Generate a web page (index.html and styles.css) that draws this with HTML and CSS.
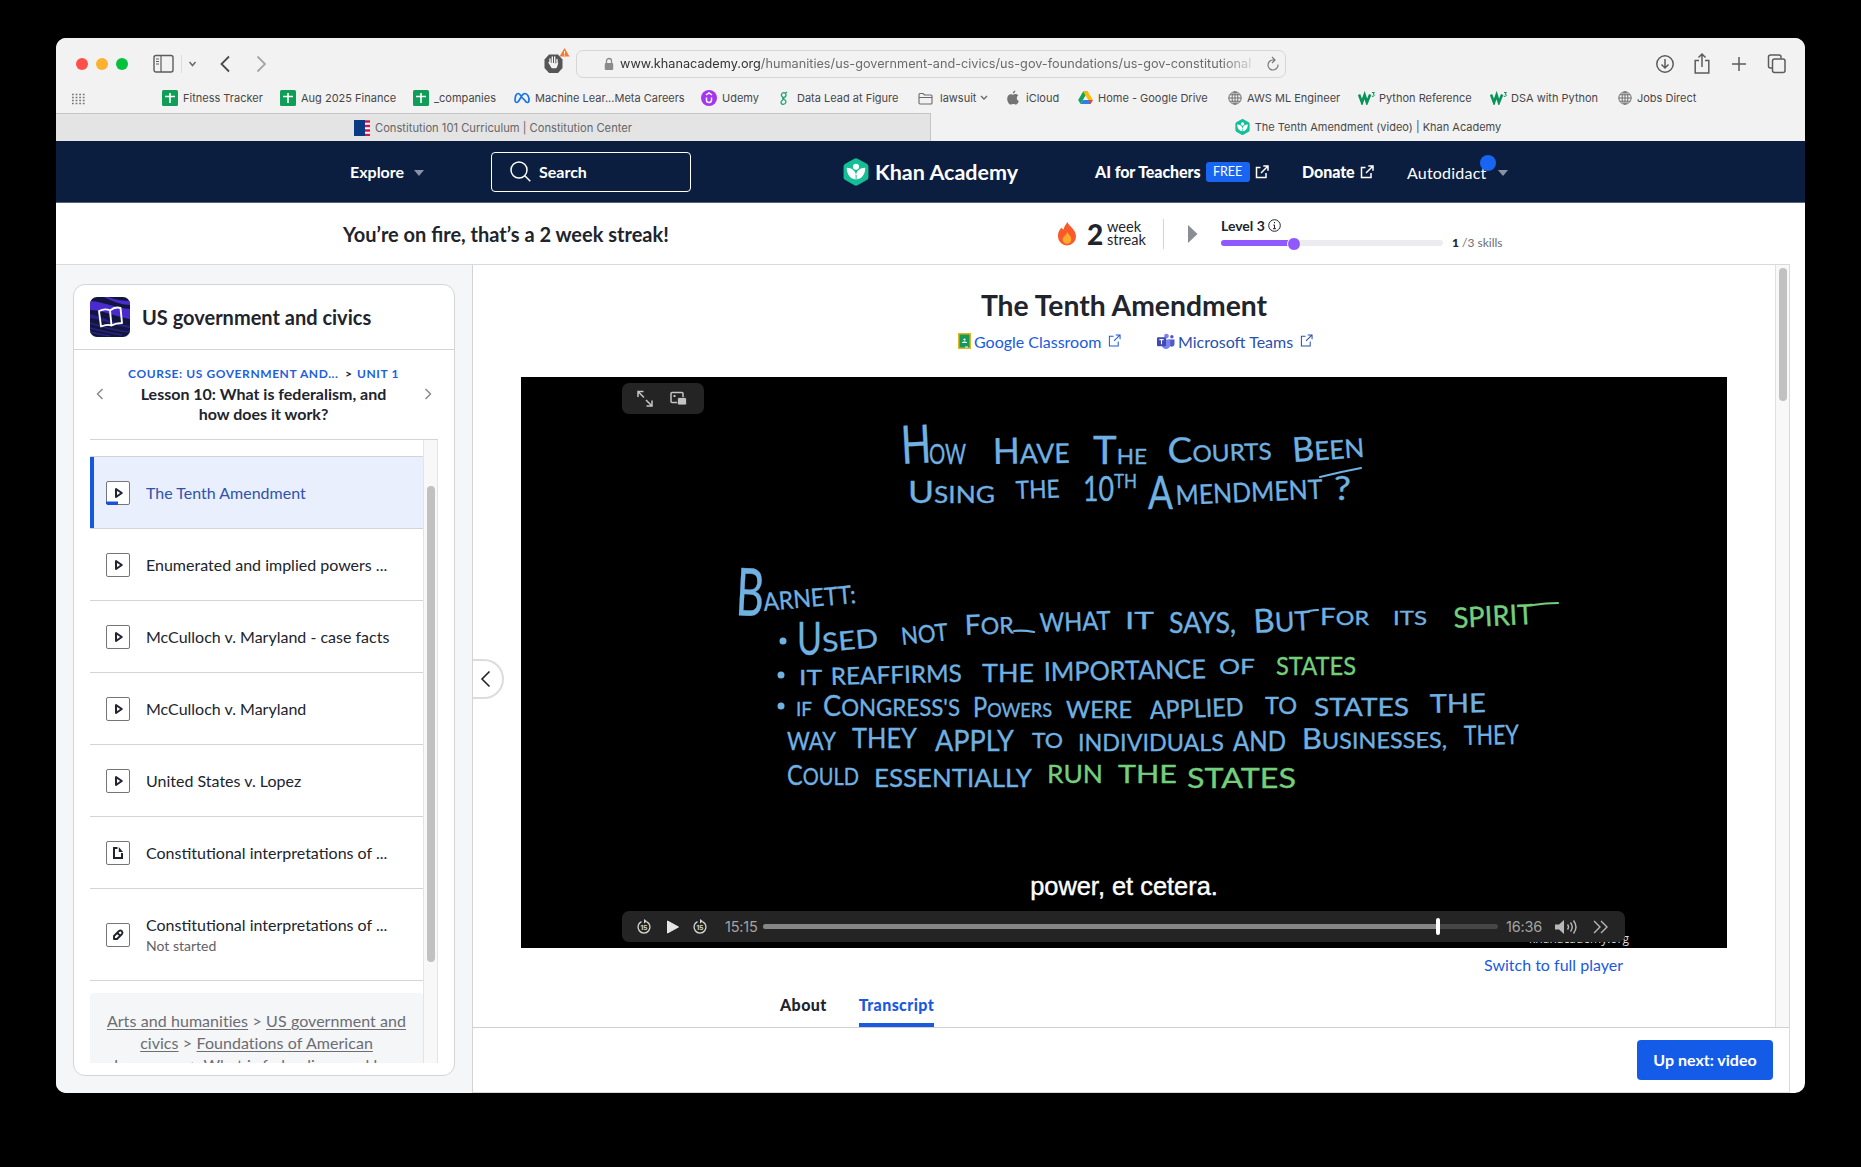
FILE: index.html
```html
<!DOCTYPE html>
<html lang="en">
<head>
<meta charset="utf-8">
<title>The Tenth Amendment (video) | Khan Academy</title>
<link rel="stylesheet" href="styles.css">
</head>
<body>
<svg class="defs" width="0" height="0" aria-hidden="true">
  <symbol id="sheet" viewBox="0 0 16 16"><rect width="16" height="16" rx="1.5" fill="#0f9d58"/><path d="M8 3v10M3 6.5h10" stroke="#fff" stroke-width="1.6"/></symbol>
  <symbol id="globe" viewBox="0 0 14 14"><g fill="none" stroke="#6e6e6e" stroke-width="1"><circle cx="7" cy="7" r="6.2"/><ellipse cx="7" cy="7" rx="2.9" ry="6.2"/><path d="M7 .8v12.4M.8 7h12.4M1.8 3.8h10.4M1.8 10.2h10.4"/></g></symbol>
  <symbol id="w3" viewBox="0 0 18 14"><path d="M1 3.5l3 8 2.600-7.500 2.300 7.500 3.300-8" fill="none" stroke="#07945b" stroke-width="2.600"/><path d="M14 1.500h2.400l-1.300 1.700c2 .1 1.700 2.600-1.200 2.100" fill="none" stroke="#07945b" stroke-width="1"/></symbol>
  <symbol id="ext" viewBox="0 0 14 14"><path d="M5.500 2.500H1.500v10h9.500V8M8.300 1h4.700v4.700M13 1L6 8" fill="none" stroke="currentColor" stroke-width="1.500"/></symbol>
  <symbol id="extthin" viewBox="0 0 14 14"><path d="M6 2.500H1.500v10.500h9.500V8M8.300 1h4.700v4.700M13 1L6.500 7.500" fill="none" stroke="currentColor" stroke-width="1.100"/></symbol>
  <symbol id="play" viewBox="0 0 24 24"><rect x=".5" y=".5" width="23" height="23" rx="1.500" fill="#fff" stroke="#74767b"/><path d="M10 8v8l5.800-4z" fill="none" stroke="#21242c" stroke-width="2" stroke-linejoin="round"/></symbol>
  <symbol id="leaf" viewBox="0 0 28 30"><path d="M12.300.6a3.600 3.600 0 0 1 3.400 0l9.900 5.600a3.600 3.600 0 0 1 1.800 3v11.500a3.600 3.600 0 0 1-1.800 3l-9.900 5.700a3.600 3.600 0 0 1-3.400 0l-9.900-5.700a3.600 3.600 0 0 1-1.800-3V9.200a3.600 3.600 0 0 1 1.800-3z" fill="#14bf96"/><circle cx="14" cy="9.300" r="3.300" fill="#fff"/><path d="M4 10.500c0 7 4 12.500 10 12.500s10-5.500 10-12.500c-5.500 0-9 3-10 7.500-1-4.500-4.500-7.500-10-7.500z" fill="#fff"/><path d="M14 18c.2 1.800.2 3.500 0 5" stroke="#14bf96" stroke-width="1"/></symbol>
  <symbol id="skip" viewBox="0 0 16 16"><path d="M10.500 2.600A6 6 0 1 1 5.500 2.600" fill="none" stroke="#d8d8d8" stroke-width="1.300"/><path d="M8 0l3 2.200L8 4.500z" fill="#d8d8d8"/><text x="8" y="11.200" text-anchor="middle" class="skip-num">15</text></symbol>
</svg>

<div class="window">
  <div class="toolbar">
    <div class="lights"><i class="red"></i><i class="amber"></i><i class="green"></i></div>
    <svg class="tb-left" width="124" height="24" viewBox="0 0 124 24" fill="none">
      <rect x="1" y="3.500" width="19" height="16.500" rx="2" stroke="#5c5c5c" stroke-width="1.400"/><path d="M8 3.500V20" stroke="#5c5c5c" stroke-width="1.200"/><path d="M3 7h3M3 9.500h3M3 12h3" stroke="#5c5c5c"/>
      <path d="M28.500 3v18" stroke="#dedede"/><path d="M36.500 10l3 3.500 3-3.500" stroke="#6a6a6a" stroke-width="1.500"/>
      <path d="M76 4.500L68.500 12l7.500 7.500" stroke="#4a4a4a" stroke-width="1.800"/><path d="M104.500 4.500l7.500 7.500-7.500 7.500" stroke="#a6a6a6" stroke-width="1.800"/>
    </svg>
    <svg class="tb-hand" width="30" height="30" viewBox="0 0 30 30">
      <path d="M7 7.500h9l4.500 5v8.500l-4.500 5H7l-4.500-5v-8.500z" fill="#555"/><path d="M8 17v-5M10.300 16v-6M12.700 16v-6M15 17v-4.500M7 15.500l3 5h4l1.500-4" stroke="#f2f2f2" stroke-width="1.400" stroke-linecap="round" stroke-linejoin="round" fill="#f2f2f2"/>
      <path d="M22.500 1l5 8.500h-10z" fill="#f47b30"/><path d="M22.500 4v3M22.500 7.700v1" stroke="#fff" stroke-width=".9"/>
    </svg>
    <div class="url">
      <svg width="10" height="14" viewBox="0 0 10 14"><rect x=".8" y="6" width="8.400" height="7" rx="1" fill="#8b8b8b"/><path d="M2.500 6V4a2.500 2.500 0 0 1 5 0v2" fill="none" stroke="#8b8b8b" stroke-width="1.300"/></svg>
      <span class="url-text"><b>www.khanacademy.org</b>/humanities/us-government-and-civics/us-gov-foundations/us-gov-constitutional</span>
      <svg width="14" height="16" viewBox="0 0 14 16" fill="none" stroke="#7b7b7b" stroke-width="1.200"><path d="M12 8.500A5 5 0 1 1 7 4h1.500M6 1l3 3-3 3"/></svg>
    </div>
    <svg class="tb-right" width="132" height="24" viewBox="0 0 132 24" fill="none" stroke="#5c5c5c" stroke-width="1.500">
      <circle cx="10" cy="12" r="8.200"/><path d="M10 7v9M6.500 12.500L10 16l3.500-3.500"/>
      <path d="M44 8.500h-3.800V21h13.600V8.500H50M47 15V2M43.500 5.500L47 2l3.500 3.500"/>
      <path d="M84 5v14M77 12h14"/>
      <rect x="117.500" y="7" width="12.500" height="13.500" rx="2"/><path d="M117 16h-1.500a2 2 0 0 1-2-2V5a2 2 0 0 1 2-2h8.500a2 2 0 0 1 2 2v1.500"/>
    </svg>
  </div>

  <div class="bookmarks">
    <svg class="dots" width="14" height="12" viewBox="0 0 14 12"><path d="M1 1.500h14M1 4.500h14M1 7.500h14M1 10.500h14" stroke="#777" stroke-width="1.600" stroke-dasharray="1.800 1.800"/></svg>
    <span><svg width="16" height="16"><use href="#sheet"/></svg>Fitness Tracker</span>
    <span><svg width="16" height="16"><use href="#sheet"/></svg>Aug 2025 Finance</span>
    <span><svg width="16" height="16"><use href="#sheet"/></svg>_companies</span>
    <span><svg width="16" height="16" viewBox="0 0 16 16"><path d="M8 7.500C6.500 5 5.500 3.500 4 3.500 2 3.500 1 7 1 10c0 3 2.300 3.500 4 .5L8 5.500c1-1.500 2-2 3-2 2.500 0 4 3.500 4 6.500s-2.500 3.500-4 .5z" fill="none" stroke="#1674e8" stroke-width="1.700"/></svg>Machine Lear...Meta Careers</span>
    <span><svg width="16" height="16" viewBox="0 0 16 16"><circle cx="8" cy="8" r="8" fill="#a435f0"/><path d="M5.500 7.500v2.700a2.500 2.300 0 0 0 5 0V7.500M5 5l3-2 3 2" fill="none" stroke="#fff" stroke-width="1.500"/></svg>Udemy</span>
    <span><svg width="8" height="16" viewBox="0 0 8 16"><g fill="none" stroke="#22a278" stroke-width="1.300"><circle cx="3.700" cy="5" r="2.300"/><path d="M5 3.500L7 2M3 7.500C1 9 6.500 9 6 12s-5 3-5 .5S4.500 10 4 7.500"/></g></svg>Data Lead at Figure</span>
    <span><svg width="15" height="13" viewBox="0 0 15 13" fill="none" stroke="#6a6a6a" stroke-width="1.100"><path d="M1 11V2.500A1 1 0 0 1 2 1.500h3l1.500 1.500H13a1 1 0 0 1 1 1V11a1 1 0 0 1-1 1H2a1 1 0 0 1-1-1zM1 5.500h13"/></svg><span class="folder">lawsuit</span><svg class="chev" width="8" height="6" viewBox="0 0 8 6"><path d="M1 1l3 3 3-3" fill="none" stroke="#666" stroke-width="1.300"/></svg></span>
    <span><svg width="12" height="16" viewBox="0 0 12 16"><path d="M8.300.5c.1 1.600-1 3-2.500 3.100C5.600 2.200 6.900.7 8.300.5zM6.100 4.800c.7 0 1.500-.7 2.700-.7 1 0 1.900.5 2.500 1.300-2.300 1.400-1.900 4.600.5 5.500-.5 1.600-1.700 3.700-3 3.700-.9 0-1.400-.6-2.500-.6s-1.600.6-2.500.6C1.900 14.600.2 11.500.2 8.800c0-2.800 1.700-4.600 3.600-4.600 1 0 1.700.6 2.300.6z" fill="#747474"/></svg><span class="cloud">iCloud</span></span>
    <span><svg width="15" height="14" viewBox="0 0 16 14"><path d="M5.500 0h5L5.300 9 2.700 13.500.2 9.200z" fill="#0fa457"/><path d="M5.500 0h5l5.300 9.200h-5z" fill="#fbbc04"/><path d="M5.300 9h10.500l-2.500 4.500H2.700z" fill="#2f7de9"/><path d="M10.800 9h5l-2.500 4.500z" fill="#ea4335"/><path d="M8 4.700L10.500 9h-5z" fill="#f2f2f2"/></svg>Home - Google Drive</span>
    <span><svg width="14" height="14"><use href="#globe"/></svg>AWS ML Engineer</span>
    <span class="w3"><svg width="18" height="14"><use href="#w3"/></svg>Python Reference</span>
    <span class="w3"><svg width="18" height="14"><use href="#w3"/></svg>DSA with Python</span>
    <span><svg width="14" height="14"><use href="#globe"/></svg>Jobs Direct</span>
  </div>

  <div class="tabs">
    <div class="tab inactive"><svg width="16" height="16" viewBox="0 0 16 16"><path d="M0 0h16v16H0z" fill="#fff"/><path d="M0 0h11v16H0z" fill="#0b3a82"/><path d="M11 1.500h5M11 6h5M11 10.500h5M11 15h5" stroke="#d4144b" stroke-width="2.400"/></svg>Constitution 101 Curriculum | Constitution Center</div>
    <div class="tab"><svg width="15" height="16"><use href="#leaf"/></svg>The Tenth Amendment (video) | Khan Academy</div>
  </div>

  <header class="nav">
    <div class="explore">Explore <i class="caret"></i></div>
    <div class="search"><svg width="21" height="21" viewBox="0 0 21 21" fill="none" stroke="#fff" stroke-width="1.500"><circle cx="9" cy="9" r="8"/><path d="M14.800 14.800l5.500 5.500"/></svg>Search</div>
    <div class="logo"><svg width="26" height="28"><use href="#leaf"/></svg><span>Khan Academy</span></div>
    <div class="teachers"><span>AI for Teachers</span><em>FREE</em><svg width="14" height="14"><use href="#ext"/></svg></div>
    <div class="donate"><span>Donate</span><svg width="14" height="14"><use href="#ext"/></svg></div>
    <div class="user">Autodidact<i class="badge"></i><i class="caret"></i></div>
  </header>

  <section class="streak">
    <h2>You’re on fire, that’s a 2 week streak!</h2>
    <svg class="flame" width="20" height="24" viewBox="0 0 20 24"><path d="M10.500 0c1 4 8.500 7 8.500 14.500a9 9 0 0 1-18 0C1 10 2.500 8 4.500 5.500c.5 1.200 1 1.800 2 2C7 5 8.500 2.500 10.500 0z" fill="#fa5a2a"/><path d="M10.300 10c1.500 3 4 4 4 7.500a4.300 4.300 0 0 1-8.600 0c0-3 3.600-4 4.600-7.500z" fill="#ffab2e"/></svg>
    <strong>2</strong>
    <div class="weeks">week<br>streak</div>
    <i class="rule"></i>
    <svg class="tri" width="10" height="18" viewBox="0 0 10 18"><path d="M0 0l9.500 9L0 18z" fill="#8b8d94"/></svg>
    <div class="level">
      <div class="level-name">Level 3 <svg width="13" height="13" viewBox="0 0 13 13" fill="none" stroke="#21242c"><circle cx="6.500" cy="6.500" r="5.800"/><path d="M6.500 6v3.700M5.300 6h1.200M5 9.700h3M6.500 3v1.300"/></svg></div>
      <div class="progress"><i style="width:74px"></i></div>
    </div>
    <div class="skills"><b>1</b> /3 skills</div>
  </section>

  <div class="body">
    <aside>
      <div class="card">
        <div class="course">
          <svg width="40" height="40" viewBox="0 0 40 40"><defs><clipPath id="tile"><rect width="40" height="40" rx="7"/></clipPath></defs><g clip-path="url(#tile)"><path d="M0 0h40v40H0z" fill="#11163f"/><path d="M0 4c14 1 26 7 40 8v10C27 20 12 13 0 13zM18 0c8 3 16 4 22 4v4C31 8 22 4 14 0z" fill="#4a2bd0"/><path d="M0 17c12 3 26 10 40 12v2C25 29 11 22 0 21z" fill="#27208a"/><path d="M0 26c12 4 25 8 40 9M0 31c10 3 20 5 32 7M0 35c8 2 14 3 20 4" stroke="#2a2080" stroke-width="1.500" fill="none"/></g><path d="M9 14c4-2 8-2 11-.5 3-2.500 7-3.500 10.500-2.500l1.500 15c-4 0-7 .5-10.500 2.500-3-1-7-.5-10.500 1zM20 13.500l1.500 15" fill="none" stroke="#fff" stroke-width="1.900" stroke-linejoin="round"/></svg>
          <h3>US government and civics</h3>
        </div>
        <div class="lesson">
          <svg width="8" height="12" viewBox="0 0 8 12"><path d="M6.500 1L1.500 6l5 5" fill="none" stroke="#85878d" stroke-width="1.400"/></svg>
          <div class="lesson-text">
            <p class="crumb">COURSE: US GOVERNMENT AND... <i>&gt;</i> UNIT 1</p>
            <h4>Lesson 10: What is federalism, and how does it work?</h4>
          </div>
          <svg width="8" height="12" viewBox="0 0 8 12"><path d="M1.500 1l5 5-5 5" fill="none" stroke="#85878d" stroke-width="1.400"/></svg>
        </div>
        <div class="scroller">
          <div class="list">
            <div class="item on"><svg width="24" height="24"><use href="#play"/><path d="M0 20.500h12V24H1.500L0 22.500z" fill="#1b50d8"/></svg><p>The Tenth Amendment</p></div>
            <div class="item"><svg width="24" height="24"><use href="#play"/></svg><p>Enumerated and implied powers ...</p></div>
            <div class="item"><svg width="24" height="24"><use href="#play"/></svg><p>McCulloch v. Maryland - case facts</p></div>
            <div class="item"><svg width="24" height="24"><use href="#play"/></svg><p>McCulloch v. Maryland</p></div>
            <div class="item"><svg width="24" height="24"><use href="#play"/></svg><p>United States v. Lopez</p></div>
            <div class="item"><svg width="24" height="24" viewBox="0 0 24 24"><rect x=".5" y=".5" width="23" height="23" rx="1.500" fill="#fff" stroke="#74767b"/><path d="M11.500 7H8v10h8v-5" fill="none" stroke="#21242c" stroke-width="2"/><path d="M12.800 6v5h4.200z" fill="#21242c"/></svg><p>Constitutional interpretations of ...</p></div>
            <div class="item tall"><svg width="24" height="24" viewBox="0 0 24 24"><rect x=".5" y=".5" width="23" height="23" rx="1.500" fill="#fff" stroke="#74767b"/><path d="M8 16v-3l5-5c2-1.500 4.500 1 3 3l-5 5zM11.500 10l2.800 2.800" fill="none" stroke="#21242c" stroke-width="1.900" stroke-linejoin="round"/></svg><p>Constitutional interpretations of ...<small>Not started</small></p></div>
            <div class="path"><u>Arts and humanities</u> &gt; <u>US government and civics</u> &gt; <u>Foundations of American democracy</u> &gt; <u>What is federalism, and how</u></div>
          </div>
          <div class="track"><i></i></div>
        </div>
      </div>
    </aside>

    <main>
      <div class="content">
        <div class="page">
          <h1>The Tenth Amendment</h1>
          <div class="share">
            <span class="gc"><svg width="13" height="16" viewBox="0 0 13 16"><path d="M0 0h13v16H0z" fill="#e5b520"/><path d="M1.500 1.500h10v13h-10z" fill="#119a5b"/><circle cx="6.500" cy="6.500" r="1.100" fill="#fff"/><path d="M3.800 10c0-2 5.400-2 5.400 0zM7 13.500h3v1H7z" fill="#fff"/></svg>Google Classroom<svg class="x" width="13" height="13"><use href="#extthin"/></svg></span>
            <span class="ms"><svg width="18" height="17" viewBox="0 0 19 17"><circle cx="10" cy="2.800" r="2.500" fill="#7b83eb"/><circle cx="15.700" cy="3.500" r="1.800" fill="#5059c9"/><path d="M12 6.500h6.500v4.500c0 3-3.500 4-5 2z" fill="#5059c9"/><path d="M5 6.500h9v5.500a4.500 4.500 0 0 1-9 0z" fill="#7b83eb"/><rect y="4" width="9.500" height="9.500" rx="1" fill="#4048b4"/><path d="M2.500 6.500h4.500M4.750 6.500v5" stroke="#fff" stroke-width="1.100"/></svg>Microsoft Teams<svg class="x" width="13" height="13"><use href="#extthin"/></svg></span>
          </div>
          <div class="video">
            <svg class="board" width="1206" height="571" viewBox="521 376 1206 571">
              <g class="ink">
                <text x="902" y="463" font-size="53" textLength="30" lengthAdjust="spacingAndGlyphs" transform="rotate(-3 902 463)">H</text>
                <text x="929" y="463" font-size="27" textLength="37" lengthAdjust="spacingAndGlyphs">OW</text>
                <text x="993" y="463" textLength="77" font-size="27" lengthAdjust="spacingAndGlyphs" transform="rotate(-1 993 463)"><tspan font-size="36">H</tspan>AVE</text>
                <text x="1093" y="463" textLength="54" font-size="22" lengthAdjust="spacingAndGlyphs"><tspan font-size="39">T</tspan>HE</text>
                <text x="1168" y="462" textLength="104" font-size="23" lengthAdjust="spacingAndGlyphs" transform="rotate(-2 1168 462)"><tspan font-size="35">C</tspan>OURTS</text>
                <text x="1293" y="461" textLength="72" font-size="26" lengthAdjust="spacingAndGlyphs" transform="rotate(-4 1293 461)"><tspan font-size="34">B</tspan>EEN</text>
                <text x="908" y="502" textLength="87" font-size="23" lengthAdjust="spacingAndGlyphs"><tspan font-size="31">U</tspan>SING</text>
                <text x="1016" y="498" textLength="44" font-size="25" lengthAdjust="spacingAndGlyphs" transform="rotate(-2 1016 498)">THE</text>
                <text x="1083" y="500" textLength="31" font-size="34" lengthAdjust="spacingAndGlyphs">10</text>
                <text x="1114" y="487" textLength="23" font-size="20" lengthAdjust="spacingAndGlyphs">TH</text>
                <text x="1148" y="508" textLength="25" font-size="46" lengthAdjust="spacingAndGlyphs">A</text>
                <text x="1176" y="504" textLength="147" font-size="27" lengthAdjust="spacingAndGlyphs" transform="rotate(-2.500 1176 504)">MENDMENT</text>
                <path d="M1320 476q20-5 41-9"/>
                <text x="1334" y="499" textLength="17" font-size="32" lengthAdjust="spacingAndGlyphs">?</text>
                <text x="735" y="614" textLength="28" font-size="66" lengthAdjust="spacingAndGlyphs" transform="rotate(3 735 614)">B</text>
                <text x="764" y="610" textLength="93" font-size="25" lengthAdjust="spacingAndGlyphs" transform="rotate(-5 764 610)">ARNETT:</text>
                <circle cx="783" cy="640" r="3.500"/>
                <text x="797" y="654" textLength="25" font-size="47" lengthAdjust="spacingAndGlyphs">U</text>
                <text x="823" y="651" textLength="56" font-size="26" lengthAdjust="spacingAndGlyphs" transform="rotate(-5 823 651)">SED</text>
                <text x="902" y="644" textLength="47" font-size="24" lengthAdjust="spacingAndGlyphs" transform="rotate(-6 902 644)">NOT</text>
                <text x="965" y="634" textLength="49" font-size="23" lengthAdjust="spacingAndGlyphs" transform="rotate(-2 965 634)"><tspan font-size="28">F</tspan>OR</text>
                <path d="M1014 630q9-1 20 1"/>
                <text x="1040" y="631" textLength="71" font-size="26" lengthAdjust="spacingAndGlyphs" transform="rotate(-2 1040 631)">WHAT</text>
                <text x="1125" y="628" textLength="29" font-size="24" lengthAdjust="spacingAndGlyphs">IT</text>
                <text x="1169" y="632" textLength="67" font-size="28" lengthAdjust="spacingAndGlyphs">SAYS,</text>
                <text x="1254" y="632" textLength="57" font-size="27" lengthAdjust="spacingAndGlyphs" transform="rotate(-3 1254 632)"><tspan font-size="33">B</tspan>UT</text>
                <path d="M1309 610q5-1 9-1"/>
                <text x="1320" y="624" textLength="49" font-size="20" lengthAdjust="spacingAndGlyphs"><tspan font-size="24">F</tspan>OR</text>
                <text x="1393" y="624" textLength="34" font-size="20" lengthAdjust="spacingAndGlyphs">ITS</text>
                <circle cx="781" cy="674" r="3.500"/>
                <text x="799" y="684" textLength="23" font-size="22" lengthAdjust="spacingAndGlyphs">IT</text>
                <text x="831" y="684" textLength="131" font-size="24" lengthAdjust="spacingAndGlyphs" transform="rotate(-1.500 831 684)">REAFFIRMS</text>
                <text x="982" y="681" textLength="52" font-size="25" lengthAdjust="spacingAndGlyphs">THE</text>
                <text x="1044" y="680" textLength="162" font-size="26" lengthAdjust="spacingAndGlyphs" transform="rotate(-1 1044 680)">IMPORTANCE</text>
                <text x="1219" y="673" textLength="36" font-size="22" lengthAdjust="spacingAndGlyphs">OF</text>
                <circle cx="781" cy="705" r="3.500"/>
                <text x="796" y="715" textLength="16" font-size="19" lengthAdjust="spacingAndGlyphs">IF</text>
                <text x="823" y="715" textLength="137" font-size="23" lengthAdjust="spacingAndGlyphs"><tspan font-size="28">C</tspan>ONGRESS'S</text>
                <text x="973" y="716" textLength="79" font-size="20" lengthAdjust="spacingAndGlyphs"><tspan font-size="26">P</tspan>OWERS</text>
                <text x="1066" y="717" textLength="66" font-size="23" lengthAdjust="spacingAndGlyphs">WERE</text>
                <text x="1150" y="718" textLength="94" font-size="25" lengthAdjust="spacingAndGlyphs" transform="rotate(-2 1150 718)">APPLIED</text>
                <text x="1265" y="713" textLength="32" font-size="23" lengthAdjust="spacingAndGlyphs">TO</text>
                <text x="1314" y="715" textLength="95" font-size="25" lengthAdjust="spacingAndGlyphs">STATES</text>
                <text x="1430" y="712" textLength="56" font-size="26" lengthAdjust="spacingAndGlyphs" transform="rotate(-1 1430 712)">THE</text>
                <text x="787" y="749" textLength="49" font-size="25" lengthAdjust="spacingAndGlyphs">WAY</text>
                <text x="852" y="747" textLength="65" font-size="26" lengthAdjust="spacingAndGlyphs">THEY</text>
                <text x="935" y="750" textLength="79" font-size="28" lengthAdjust="spacingAndGlyphs">APPLY</text>
                <text x="1032" y="747" textLength="31" font-size="21" lengthAdjust="spacingAndGlyphs">TO</text>
                <text x="1078" y="750" textLength="146" font-size="24" lengthAdjust="spacingAndGlyphs">INDIVIDUALS</text>
                <text x="1233" y="750" textLength="53" font-size="27" lengthAdjust="spacingAndGlyphs">AND</text>
                <text x="1302" y="748" textLength="145" font-size="22" lengthAdjust="spacingAndGlyphs" transform="rotate(-.5 1302 748)"><tspan font-size="29">B</tspan>USINESSES,</text>
                <text x="1464" y="744" textLength="55" font-size="27" lengthAdjust="spacingAndGlyphs" transform="rotate(-1 1464 744)">THEY</text>
                <text x="787" y="784" textLength="72" font-size="23" lengthAdjust="spacingAndGlyphs"><tspan font-size="27">C</tspan>OULD</text>
                <text x="874" y="786" textLength="158" font-size="25" lengthAdjust="spacingAndGlyphs">ESSENTIALLY</text>
              </g>
              <g class="ink lime">
                <text x="1454" y="627" textLength="80" font-size="28" lengthAdjust="spacingAndGlyphs" transform="rotate(-3 1454 627)">SPIRIT</text>
                <path d="M1533 604q13-2 25-2"/>
                <text x="1276" y="674" textLength="80" font-size="25" lengthAdjust="spacingAndGlyphs">STATES</text>
                <text x="1047" y="782" textLength="56" font-size="25" lengthAdjust="spacingAndGlyphs">RUN</text>
                <text x="1118" y="782" textLength="59" font-size="25" lengthAdjust="spacingAndGlyphs">THE</text>
                <text x="1187" y="787" textLength="109" font-size="26" lengthAdjust="spacingAndGlyphs">STATES</text>
              </g>
              <text class="mark" x="1529" y="942" textLength="100" lengthAdjust="spacingAndGlyphs">khanacademy.org</text>
            </svg>
            <div class="pip"><svg width="82" height="31" viewBox="0 0 82 31" fill="none" stroke="#c4c4c4" stroke-width="1.500"><path d="M16 14V8.500h5.500M16 8.500l6 6M30 17.500V23h-5.500M30 23l-6-6"/><rect x="49" y="9.500" width="12" height="10" rx="1"/><path d="M51.500 12h2v2h-2z" fill="#c4c4c4" stroke="none"/><rect x="55.500" y="14.500" width="9" height="7.500" rx="1.500" fill="#c4c4c4" stroke="#242424" stroke-width=".8"/></svg></div>
            <div class="caption">power, et cetera.</div>
            <div class="controls">
              <svg width="16" height="16"><use href="#skip"/></svg>
              <svg width="12" height="14" viewBox="0 0 12 14"><path d="M.5 1v12L11.500 7z" fill="#e6e6e6" stroke="#e6e6e6" stroke-linejoin="round"/></svg>
              <svg width="16" height="16"><use href="#skip"/></svg>
              <span class="t1">15:15</span>
              <div class="bar"><i style="width:674px"></i></div>
              <span class="t2">16:36</span>
              <svg width="23" height="16" viewBox="0 0 23 16" fill="none" stroke="#b8b8b8" stroke-width="1.400"><path d="M0 5.500h4L9 1v14l-5-4.500H0z" fill="#b8b8b8" stroke="none"/><path d="M12.500 5.500q2 2.500 0 5M15.500 3.500q3.500 4.500 0 9M18.500 1.500q5 6.500 0 13"/></svg>
              <svg width="16" height="14" viewBox="0 0 16 14" fill="none" stroke="#b8b8b8" stroke-width="1.400"><path d="M1 1l6 6-6 6M8 1l6 6-6 6"/></svg>
            </div>
          </div>
          <a class="switch">Switch to full player</a>
          <div class="subtabs"><b>About</b><b class="cur">Transcript</b></div>
        </div>
        <div class="pagetrack"><i></i></div>
      </div>
      <footer><span class="next">Up next: video</span></footer>
      <div class="collapse"><svg width="11" height="18" viewBox="0 0 11 18"><path d="M9.500 1.500L2 9l7.500 7.500" fill="none" stroke="#21242c" stroke-width="1.600"/></svg></div>
    </main>
  </div>
</div>
</body>
</html>
```
FILE: styles.css
```css
* { box-sizing: border-box; margin: 0; padding: 0; }
body { background: #000; font-family: Lato, sans-serif; color: #21242c; width: 1861px; height: 1167px; overflow: hidden; padding: 38px 56px; }
svg { display: block; flex: none; }
i, em { font-style: normal; }
.defs { position: absolute; }
.window { width: 1749px; height: 1055px; background: #fff; border-radius: 10px; overflow: hidden; display: flex; flex-direction: column; }

.toolbar { height: 52px; flex: none; background: #f3f2f3; display: flex; align-items: center; font-family: Inter, sans-serif; }
.lights { display: flex; gap: 8px; margin-left: 20px; width: 77px; }
.lights i { width: 12px; height: 12px; border-radius: 50%; }
.red { background: #ff4f4d; }
.amber { background: #ffb02e; }
.green { background: #05c13c; }
.tb-hand { margin-left: 265px; margin-top: -5px; }
.url { margin-left: 4px; width: 710px; height: 28px; border: 1px solid #d5d5d5; border-radius: 7px; display: flex; align-items: center; padding: 0 5px 0 27px; }
.url-text { margin-left: 6px; width: 633px; margin-right: 13px; font-size: 12.700px; line-height: 20px; color: #6b6b6b; white-space: nowrap; overflow: hidden; mask-image: linear-gradient(90deg, #000 95%, transparent 101%); }
.url-text b { font-weight: 400; color: #333; }
.tb-right { margin-left: 369px; }

.bookmarks { height: 23px; flex: none; background: #f3f2f3; padding-bottom: 8px; display: grid; align-items: center; font-family: Inter, sans-serif; font-size: 11px; color: #474747; white-space: nowrap;
  grid-template-columns: 90px 118px 133px 101px 187px 80px 137px 89px 71px 150px 130px 132px 128px 100px; padding-left: 15px; overflow: visible; }
.bookmarks > span { display: flex; align-items: center; gap: 5px; margin-left: 1px; }
.bookmarks > span:nth-of-type(6) { margin-left: 0; gap: 9px; }
.bookmarks > .w3 { gap: 3px; }
.bookmarks .folder, .bookmarks .cloud { margin-left: 2px; }
.dots { margin-top: 2px; }
.bookmarks .chev { margin-left: -1px; }

.tabs { height: 28px; flex: none; display: flex; background: #f3f2f3; font-family: Inter, sans-serif; font-size: 11px; color: #484848; }
.tab { flex: 1; display: flex; align-items: center; justify-content: center; gap: 5px; }
.tab.inactive { background: #e4e4e4; color: #666; border-top: 1px solid #c5c5c5; border-right: 1px solid #c5c5c5; font-size: 11.200px; }

.nav { height: 62px; flex: none; background: #0c1e40; border-bottom: 1px solid #556179; color: #fff; display: grid; align-items: center; font-size: 16px; font-weight: 700; padding-left: 294px;
  grid-template-columns: 141px 352px 252px 207px 105px 120px; white-space: nowrap; }
.nav > div { display: flex; align-items: center; }
.caret { border: 5.5px solid transparent; border-top: 6.5px solid #8a93a5; border-bottom: 0; margin-top: 2px; }
.explore .caret { margin-left: 10px; }
.search { width: 200px; height: 40px; border: 1px solid #fff; border-radius: 4px; padding-left: 18px; gap: 8px; }
.logo { gap: 6px; font-size: 21.500px; }
.teachers { gap: 5px; }
.teachers span, .donate span { letter-spacing: -.08px; font-weight: 900; }
.teachers em { background: #1865f2; border-radius: 3px; width: 44px; height: 20px; font-size: 12.500px; font-weight: 400; text-align: center; line-height: 20px; }
.donate { gap: 5px; }
.user { position: relative; font-weight: 400; letter-spacing: .2px; padding-top: 1px; }
.user .caret { margin-left: 12px; }
.badge { position: absolute; left: 73px; top: -7px; width: 16px; height: 16px; border-radius: 50%; background: #1865f2; }

.streak { height: 61px; flex: none; display: flex; align-items: center; padding-left: 287px; position: relative; white-space: nowrap; }
.streak h2 { font-size: 20px; width: 714px; }
.streak strong { font-size: 28px; font-weight: 900; margin-left: 10px; width: 20px; line-height: 30px; }
.weeks { font-size: 14.600px; line-height: 12.500px; width: 56px; }
.rule { width: 1px; height: 30px; background: #d3d4d7; margin-right: 24px; }
.tri { margin-right: 23px; }
.level { width: 222px; height: 30px; }
.level-name { font-size: 14px; font-weight: 700; line-height: 14px; display: flex; gap: 3px; }
.progress { height: 6px; border-radius: 3px; background: #ececee; margin-top: 7px; }
.progress i { display: block; position: relative; height: 6px; border-radius: 3px; background: #9059ff; }
.progress i::after { content: ""; position: absolute; right: -6px; top: -3px; width: 12px; height: 12px; border: 1px solid #fff; border-radius: 50%; background: #9059ff; }
.skills { font-size: 12px; color: #6b6d74; margin: 18px 0 0 9px; }
.skills b { color: #21242c; font-weight: 900; }

.body { flex: 1; display: flex; min-height: 0; }
aside { width: 417px; background: #f5f6f8; border-right: 1px solid #d3d4d7; border-top: 1px solid #d9dadd; padding: 19px 17px 16px 17px; }
.card { height: 792px; width: 382px; background: #fff; border: 1px solid #d3d4d7; border-radius: 12px; display: flex; flex-direction: column; padding-bottom: 12px; }
.course { height: 65px; flex: none; border-bottom: 1px solid #d3d4d7; display: flex; align-items: center; padding-left: 16px; gap: 12px; }
.course h3 { font-size: 20px; }
.lesson { height: 89px; flex: none; display: flex; align-items: center; justify-content: space-between; padding: 0 22px 2px; }
.lesson-text { width: 290px; text-align: center; margin-right: 1px; }
.crumb { font-size: 12px; font-weight: 700; letter-spacing: .58px; color: #1f5fdd; line-height: 19px; white-space: nowrap; }
.crumb i { color: #21242c; margin: 0 1px 0 3px; }
h4 { font-size: 16px; line-height: 20px; width: 264px; margin: 1px auto 0; }
.scroller { flex: 1; min-height: 0; margin: 0 16px; border-top: 1px solid #d3d4d7; display: flex; overflow: hidden; }
.list { width: 333px; padding-top: 16px; overflow: hidden; }
.item { height: 72px; border-bottom: 1px solid #d3d4d7; display: flex; align-items: center; padding-left: 16px; gap: 16px; font-size: 16px; white-space: nowrap; }
.item.on { border-top: 1px solid #d3d4d7; height: 73px; background: #e9effc; color: #2f53ab; box-shadow: inset 4px 0 #1558de; }
.item.tall { height: 92px; }
.item small { display: block; font-size: 14px; line-height: 17px; color: #5f6167; padding-top: 2px; }
.item p { line-height: 20px; }
.path { margin-top: 12px; background: #f5f6f8; border-radius: 4px; text-align: center; padding: 17px 14px; font-size: 16px; line-height: 22px; color: #6b6d73; height: 140px; letter-spacing: .04px; word-spacing: .2px; }
.path u { text-underline-offset: 2px; }
.track { width: 15px; background: #f8f8f8; border: 1px solid #e4e4e4; border-width: 0 1px; padding: 46px 3px 0; }
.track i { display: block; width: 8px; height: 476px; border-radius: 4px; background: #c1c1c1; }

main { width: 1317px; position: relative; display: flex; flex-direction: column; border-right: 1px solid #d9dadd; border-top: 1px solid #d9dadd; }
.content { height: 763px; display: flex; border-bottom: 1px solid #d0d1d5; }
.page { width: 1302px; padding: 20px 0 0 48px; }
h1 { font-size: 28.300px; line-height: 40px; text-align: center; width: 1206px; }
.share { display: flex; height: 22px; margin-top: 5px; padding-left: 437px; font-size: 16px; }
.share span { display: flex; align-items: center; color: #1b5adf; }
.gc { width: 199px; gap: 3px; }
.ms { gap: 3px; }
.share span.ms { color: #2a4fae; }
.share .x { margin: -2px 0 0 4px; }
.video { width: 1206px; height: 571px; margin-top: 25px; background: #000; position: relative; }
.board { position: absolute; inset: 0; }
.ink { fill: #70b1e2; font-family: Lato, sans-serif; }
.ink text { stroke: #70b1e2; stroke-width: .35; stroke-linejoin: round; }
.ink path { fill: none; stroke: #70b1e2; stroke-width: 2.200; stroke-linecap: round; }
.ink.lime { fill: #74cf7b; }
.ink.lime path, .ink.lime text { stroke: #74cf7b; }
.mark { fill: #ddd; font: 13.500px "Open Sans", sans-serif; }
.pip { position: absolute; left: 101px; top: 6px; width: 82px; height: 31px; border-radius: 7px; background: #242424; }
.caption { position: absolute; left: 0; right: 0; top: 494px; text-align: center; color: #fff; font: 25.400px/30px "Liberation Sans", sans-serif; -webkit-text-stroke: .4px #fff; }
.controls { position: absolute; left: 101px; top: 534px; width: 1003px; height: 31px; border-radius: 7px; background: #242424; display: flex; align-items: center; padding-left: 14px; color: #a3a3a3; font: 14.500px Inter, sans-serif; }
.controls svg:nth-child(2) { margin: 0 13px 0 15px; }
.t1 { width: 38px; margin-left: 17px; letter-spacing: -.2px; }
.bar { width: 735px; height: 5px; border-radius: 3px; background: #464646; }
.bar i { position: relative; display: block; height: 5px; border-radius: 3px 0 0 3px; background: #868686; }
.bar i::after { content: ""; position: absolute; right: -3px; top: -6px; width: 4px; height: 17px; border-radius: 2px; background: #fff; }
.t2 { width: 49px; margin-left: 8px; letter-spacing: -.2px; }
.controls svg:last-child { margin-left: 15px; }
.skip-num { font: 700 6.500px Inter, sans-serif; fill: #d8d8d8; }
.switch { display: block; width: 1102px; text-align: right; margin-top: 7px; font-size: 16px; line-height: 20px; color: #1b5adf; }
.subtabs { display: flex; gap: 32px; padding-left: 259px; margin-top: 15px; font-size: 16px; }
.subtabs b { height: 37px; line-height: 30px; font-weight: 900; letter-spacing: .4px; }
.cur { color: #1b5adf; border-bottom: 4px solid #1b5adf; }
.pagetrack { width: 14px; background: #f8f8f8; border-left: 1px solid #e0e0e0; padding: 3px 2px 0 3px; }
.pagetrack i { display: block; width: 8px; height: 133px; border-radius: 4px; background: #c1c1c1; }
footer { flex: 1; display: flex; justify-content: flex-end; padding: 12px 16px 0 0; border-bottom: 1px solid #d9dadd; }
.next { width: 136px; height: 40px; background: #145ce8; color: #fff; border-radius: 4px; font-size: 16px; font-weight: 700; line-height: 40px; text-align: center; }
.collapse { position: absolute; left: 0; top: 394px; width: 31px; height: 40px; background: #fff; border: 2px solid #dcdcde; border-left: 0; border-radius: 0 20px 20px 0; display: flex; align-items: center; padding-left: 7px; }
```
